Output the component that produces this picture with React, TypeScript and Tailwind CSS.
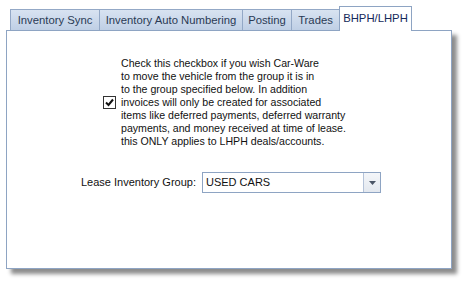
import React from 'react';

const tabs = [
  { label: 'Inventory Sync', w: 'w-[90px]' },
  { label: 'Inventory Auto Numbering', w: 'w-[144px]' },
  { label: 'Posting', w: 'w-[50px]' },
  { label: 'Trades', w: 'w-[49px]' },
];

const lines = [
  'Check this checkbox if you wish Car-Ware',
  'to move the vehicle from the group it is in',
  'to the group specified below. In addition',
  'invoices will only be created for associated',
  'items like deferred payments, deferred warranty',
  'payments, and money received at time of lease.',
  'this ONLY applies to LHPH deals/accounts.',
];

export default function App() {
  return (
    <div className="w-[465px] h-[282px] bg-white pl-[6px] pt-[5px] font-['Liberation_Sans',sans-serif] text-black overflow-hidden">
      <div className="w-[446px]">
        {/* tab strip */}
        <div className="flex items-end h-[25px] pl-[4px] relative z-10">
          {tabs.map((t) => (
            <div
              key={t.label}
              className={`${t.w} h-[21px] -mr-px flex items-center justify-center border border-b-0 border-[#93a8c6] bg-gradient-to-b from-[#d8e3f1] to-[#bfcfe5] text-[11.3px] text-[#2a3a55]`}
            >
              {t.label}
            </div>
          ))}
          <div className="w-[73px] h-[25px] flex items-center justify-center border border-b-0 border-[#8ea4c3] bg-white text-[11.3px] text-[#15295a] translate-y-px pb-[2px]">
            BHPH/LHPH
          </div>
        </div>
        {/* panel */}
        <div className="h-[239px] border border-[#8ea4c3] bg-white shadow-[5px_5px_4px_rgba(0,0,0,0.45)]">
          <div className="flex items-center pl-[96px] pt-[26px]">
            <div className="w-[13px] h-[13px] border border-[#333] bg-white flex items-center justify-center mr-[5px]">
              <svg width="9" height="9" viewBox="0 0 9 9">
                <path d="M1 4.5 L3.5 7 L8 1.5" stroke="#111" strokeWidth="2" fill="none" />
              </svg>
            </div>
            <div className="text-[10.6px] leading-[13px] text-[#111]">
              {lines.map((l) => (
                <div key={l}>{l}</div>
              ))}
            </div>
          </div>
          <div className="flex items-center pl-[74px] mt-[24px]">
            <span className="text-[11px] text-[#111] w-[121px]">Lease Inventory Group:</span>
            <div className="w-[179px] h-[21px] border border-[#8ea4c3] flex items-stretch">
              <div className="flex-1 flex items-center pl-[3px] text-[11px] text-[#111]">USED CARS</div>
              <div className="w-[17px] border-l border-[#b5c3d8] bg-gradient-to-b from-[#f4f6f9] to-[#e3e8ef] flex items-center justify-center">
                <svg width="7" height="4" viewBox="0 0 7 4">
                  <path d="M0 0 H7 L3.5 4 Z" fill="#4a5566" />
                </svg>
              </div>
            </div>
          </div>
        </div>
      </div>
    </div>
  );
}
